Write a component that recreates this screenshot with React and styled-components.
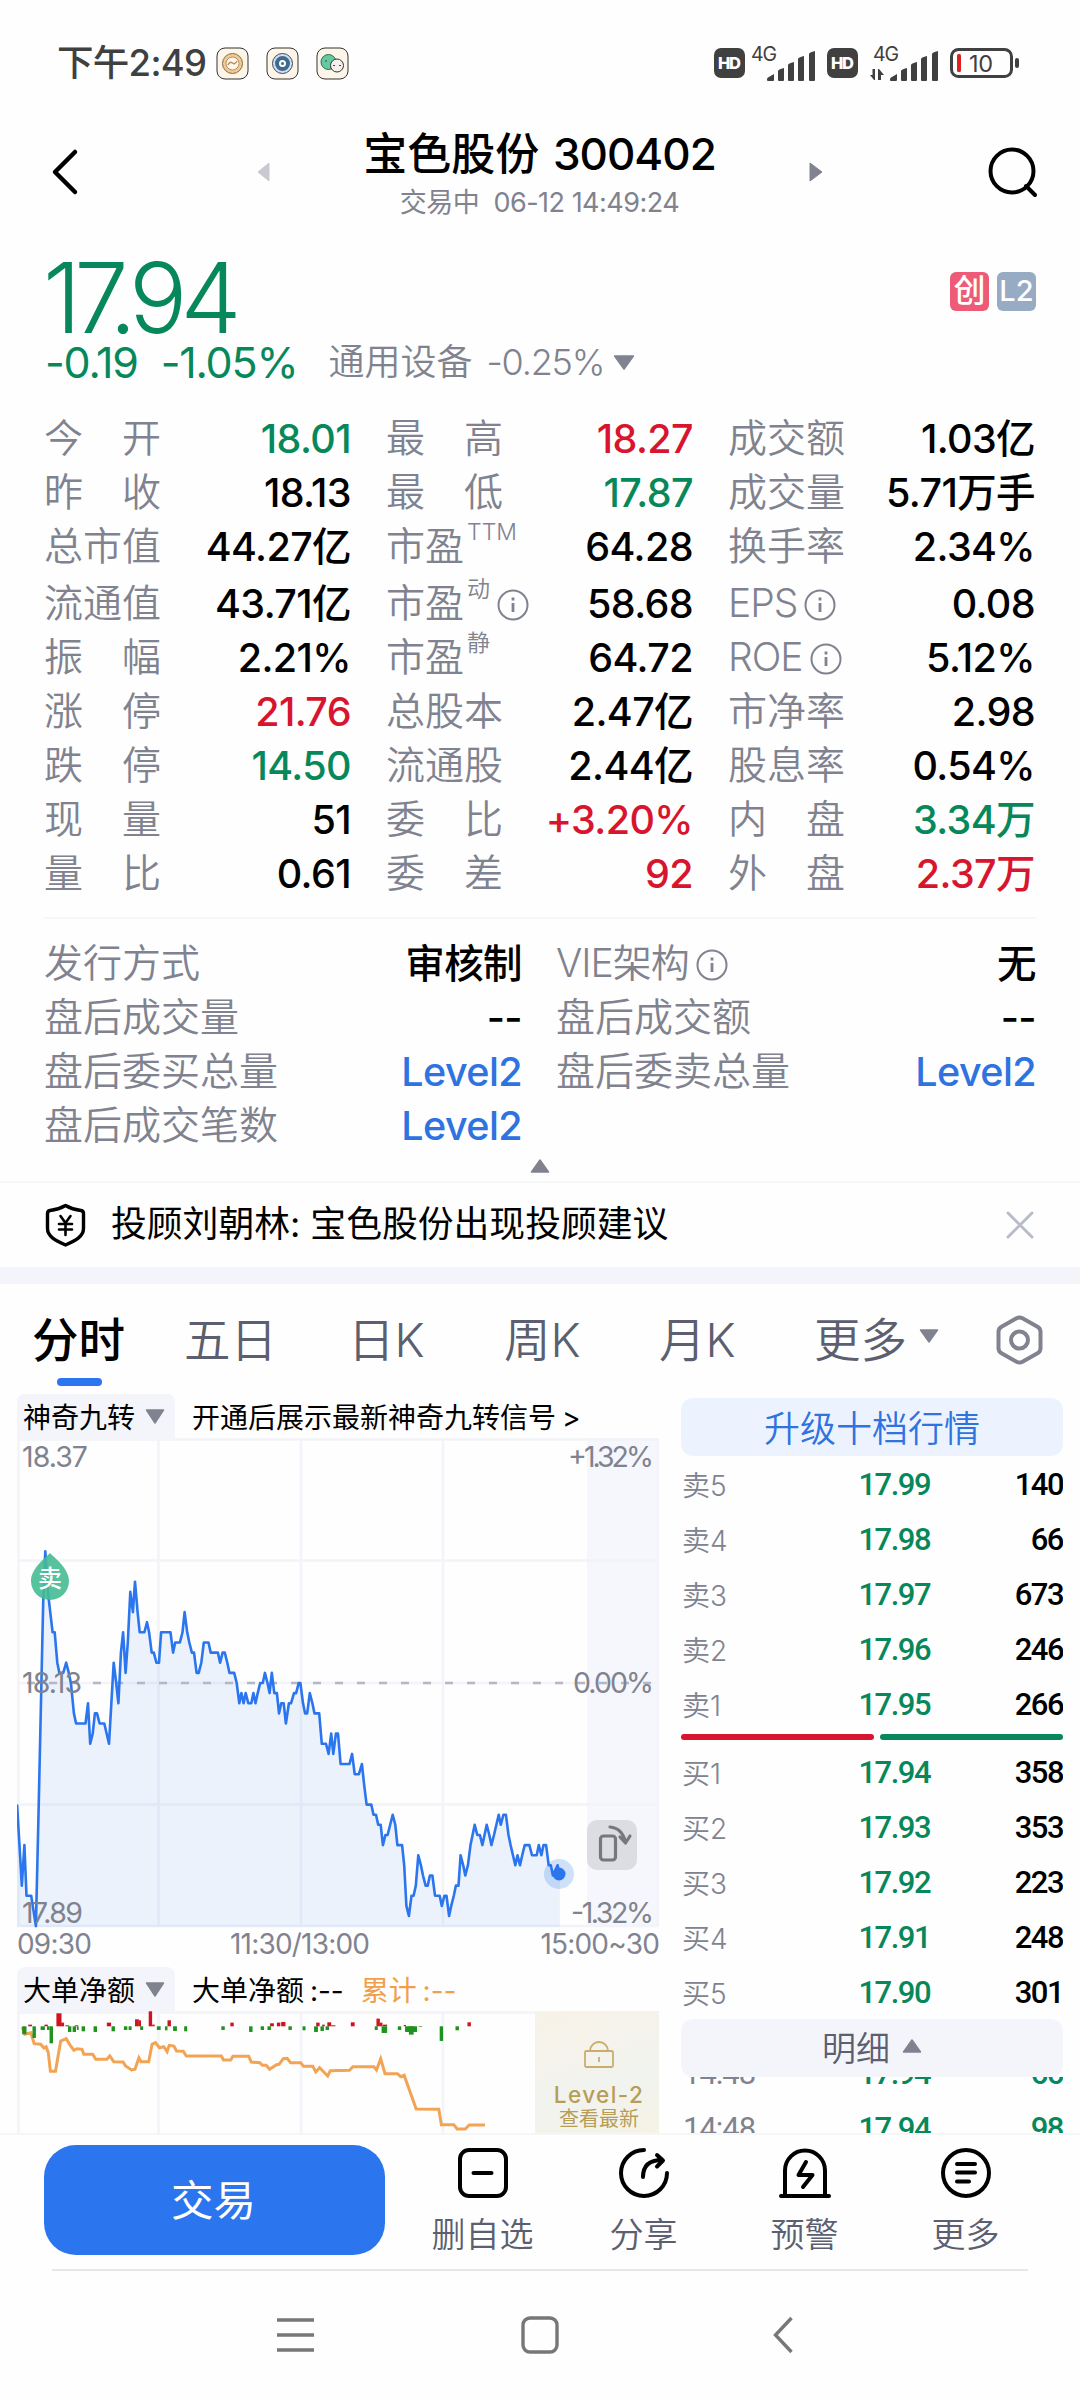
import React from 'react';
import styled, { createGlobalStyle } from 'styled-components';

const GREEN = '#07885a';
const RED = '#d8152f';
const BLUE = '#2b75ee';
const GREY = '#80838f';
const SLATE = '#5b5f70';
const colors = { green: GREEN, red: RED, blue: '#2f73e0' };

const GlobalStyle = createGlobalStyle`
  * {
    box-sizing: border-box;
  }
  body {
    margin: 0;
    background: #fff;
    color: #000;
    font-family: Inter, 'Noto Sans CJK SC', sans-serif;
  }
  svg {
    display: block;
    flex-shrink: 0;
    overflow: visible;
  }
`;

const Screen = styled.div`
  width: 1080px;
  height: 2400px;
  overflow: hidden;
  display: flex;
  flex-direction: column;
  background: #fefefe;
  white-space: nowrap;
`;

/* status bar */

const StatusBar = styled.div`
  height: 104px;
  padding: 22px 61px 0 57px;
  display: flex;
  align-items: center;
  justify-content: space-between;
  color: #404040;
`;

const StatusGroup = styled.div`
  display: flex;
  align-items: center;
  gap: ${(p) => p.$gap}px;
`;

const Clock = styled.span`
  width: 142px;
  font-size: 36.5px;
  line-height: 40px;
  font-weight: 500;
  letter-spacing: -0.7px;
`;

/* header */

const Header = styled.header`
  height: 136px;
  display: grid;
  grid-template-columns: 257px 13px 1fr 14px 257px;
  align-items: center;
`;

const HeaderSide = styled.div`
  display: flex;
  justify-content: ${(p) => (p.$end ? 'flex-end' : 'flex-start')};
  padding: 0 42px 0 51px;
`;

const TitleBox = styled.div`
  padding-top: 6px;
  text-align: center;
`;

const Title = styled.h1`
  margin: 0;
  font-size: 44px;
  line-height: 56px;
  font-weight: 500;

  span {
    margin-left: 2px;
    letter-spacing: -1px;
  }
`;

const SubTitle = styled.div`
  font-size: 27px;
  line-height: 42px;
  letter-spacing: -0.5px;
  color: ${GREY};
`;

/* price */

const PriceBlock = styled.section`
  height: 172px;
  padding: 12px 44px 0 45px;
`;

const PriceRow = styled.div`
  display: flex;
  align-items: flex-start;
  justify-content: space-between;
`;

const Price = styled.div`
  font-size: 97px;
  line-height: 92px;
  font-weight: 350;
  letter-spacing: -7px;
  margin-left: -2px;
  color: ${GREEN};
`;

const Badges = styled.div`
  display: flex;
  gap: 8px;
  margin-top: 20px;
`;

const Badge = styled.span`
  width: 39px;
  height: 39px;
  border-radius: 6px;
  background: ${(p) => p.$bg};
  color: #fff;
  font-size: ${(p) => p.$size}px;
  line-height: 38px;
  font-weight: ${(p) => p.$weight};
  text-align: center;
`;

const ChangeRow = styled.div`
  height: 36px;
  display: flex;
  align-items: center;
  color: ${GREEN};
  font-size: 43px;
  line-height: 36px;
  letter-spacing: -1.2px;
`;

const Percent = styled.span`
  margin-left: 23px;
`;

const Sector = styled.span`
  display: flex;
  align-items: center;
  margin-left: 31px;
  font-size: 36px;
  font-weight: 350;
  letter-spacing: 0;
  color: ${GREY};

  span {
    margin: 0 9px 0 14px;
    letter-spacing: -1.2px;
  }
`;

/* quote table */

const QuoteGrid = styled.section`
  display: grid;
  grid-template-columns: repeat(3, 307px);
  grid-template-rows: 54px 54px 54px 57px repeat(5, 54px);
  column-gap: 35px;
  padding: 0 44px;
`;

const ExtraGrid = styled.section`
  display: grid;
  grid-template-columns: 478px 480px;
  grid-auto-rows: 54px;
  column-gap: 34px;
  margin: 16px 44px 0;
  padding-top: 18px;
  border-top: 2px solid #f5f6f8;
`;

const Cell = styled.div`
  display: flex;
  align-items: center;
  justify-content: space-between;
  padding-top: ${(p) => (p.$low ? 3 : 0)}px;
`;

const Label = styled.span`
  display: flex;
  align-items: center;
  justify-content: ${(p) => (p.$spread ? 'space-between' : 'flex-start')};
  width: ${(p) => (p.$spread ? '117px' : 'auto')};
  font-size: 39px;
  line-height: 50px;
  font-weight: 350;
  letter-spacing: ${(p) => (p.$latin ? '-1px' : 0)};
  color: ${GREY};
  margin-top: -3px;

  sup {
    align-self: flex-start;
    font-size: 23px;
    line-height: 23px;
    margin-left: 3px;
  }
  svg {
    margin: 4px 0 0 7px;
  }
`;

const Value = styled.span`
  font-size: 39.5px;
  line-height: 50px;
  font-weight: 500;
  letter-spacing: -0.6px;
  color: ${(p) => colors[p.$tone] || '#000'};
`;

const Collapse = styled.div`
  height: 28px;
  display: flex;
  align-items: center;
  justify-content: center;
  padding-bottom: 2px;
`;

/* notice */

const Notice = styled.section`
  height: 86px;
  display: flex;
  align-items: center;
  padding: 0 46px 0 45px;
  border-top: 2px solid #f5f6f8;
`;

const NoticeText = styled.p`
  flex: 1;
  margin: -8px 0 0 25px;
  font-size: 35.8px;
`;

const Band = styled.div`
  height: 17px;
  flex-shrink: 0;
  background: #f4f5fa;
`;

/* tabs */

const Tabs = styled.nav`
  height: 110px;
  flex-shrink: 0;
  display: grid;
  grid-template-columns: 152px 164px 156px 155px 155px 182px 47px;
  align-items: center;
  padding: 2px 0 0 32px;
`;

const Tab = styled.div`
  position: relative;
  display: flex;
  align-items: center;
  gap: 12px;
  height: 104px;
  margin-top: -8px;
  font-size: 46.500px;
  font-weight: ${(p) => (p.$active ? 500 : 350)};
  color: ${(p) => (p.$active ? '#000' : SLATE)};

  &::after {
    content: '';
    display: ${(p) => (p.$active ? 'block' : 'none')};
    position: absolute;
    left: 25px;
    top: 94px;
    width: 45px;
    height: 8px;
    border-radius: 4px;
    background: ${BLUE};
  }
`;

/* charts and order book */

const Main = styled.main`
  height: 739px;
  flex-shrink: 0;
  display: grid;
  grid-template-columns: 642px 382px;
  column-gap: 22px;
  padding-left: 17px;
  overflow: hidden;
`;

const Column = styled.div`
  height: 739px;
  overflow: hidden;
`;

const IndicatorBar = styled.div`
  height: 44px;
  display: flex;
  align-items: center;
  font-size: 28px;
  word-spacing: -2px;
`;

const Picker = styled.div`
  width: 158px;
  height: 44px;
  display: flex;
  align-items: center;
  justify-content: space-between;
  padding: 0 10px 0 6px;
  margin-right: 17px;
  border-radius: 8px 8px 0 0;
  background: #f4f5fa;
`;

const Accent = styled.span`
  margin-left: 17px;
  color: #f0a04c;
`;

const TimeAxis = styled.div`
  height: 40px;
  display: grid;
  grid-template-columns: 213px 1fr auto;
  font-size: 28px;
  line-height: 34px;
  letter-spacing: -0.8px;
  color: ${GREY};
`;

const FlowRow = styled.div`
  display: grid;
  grid-template-columns: 518px 124px;
  height: 123px;
`;

const Level2Card = styled.div`
  display: flex;
  flex-direction: column;
  align-items: center;
  padding: 30px 0 0 4px;
  background: linear-gradient(160deg, #f8f2e7, #f1f3ef 60%, #f6f3e6);
  color: #b99c58;
  font-size: 20px;
  line-height: 24px;

  strong {
    margin-top: 14px;
    font-size: 22.500px;
    line-height: 25px;
    font-weight: 500;
    letter-spacing: 1.4px;
  }
`;

const WideButton = styled.div`
  height: 58px;
  display: flex;
  align-items: center;
  justify-content: center;
  gap: 12px;
  padding-bottom: ${(p) => p.$lift}px;
  border-radius: 12px;
  font-size: ${(p) => p.$size}px;
  font-weight: 350;
  background: ${(p) => (p.$primary ? '#edf3fe' : '#f4f5fa')};
  color: ${(p) => (p.$primary ? '#2f73e0' : SLATE)};
`;

const Book = styled.div`
  padding-top: 4px;
`;

const BookRow = styled.div`
  display: grid;
  grid-template-columns: 100px 149px 1fr;
  align-items: center;
  height: 55px;
  font-family: Roboto, 'Noto Sans CJK SC', sans-serif;
  font-size: 31px;
  font-weight: 500;
  letter-spacing: -1.500px;
  color: ${(p) => (p.$trade ? GREEN : '#000')};

  span {
    padding-top: 2px;
    text-align: right;
  }
  span:first-child {
    padding: ${(p) => (p.$trade ? '2px 0 0 2px' : '0 0 0 1px')};
    text-align: left;
    font-size: ${(p) => (p.$trade ? 31 : 28)}px;
    font-family: ${(p) => (p.$trade ? 'Roboto' : 'Inter')}, 'Noto Sans CJK SC', sans-serif;
    font-weight: ${(p) => (p.$trade ? 400 : 350)};
    letter-spacing: ${(p) => (p.$trade ? -1 : 0)}px;
    color: ${GREY};
  }
  span:nth-child(2) {
    color: ${GREEN};
  }
`;

const Ratio = styled.div`
  display: grid;
  grid-template-columns: 193px 183px;
  gap: 6px;
  height: 6px;
  margin-top: 3px;
`;

const RatioPart = styled.div`
  border-radius: 3px;
  background: ${(p) => p.$bg};
`;

const Trades = styled.div`
  height: 57px;
  overflow: hidden;

  > :first-child {
    margin-top: -32px;
  }
`;

/* bottom bar */

const BottomBar = styled.footer`
  height: 136px;
  flex-shrink: 0;
  display: flex;
  padding: 10px 34px 0 44px;
  border-top: 2px solid #f5f6f8;
`;

const TradeButton = styled.button`
  width: 341px;
  height: 110px;
  padding: 0 2px 6px 0;
  border: 0;
  border-radius: 32px;
  margin-right: 17px;
  background: ${BLUE};
  color: #fff;
  font: 400 42.500px Inter, 'Noto Sans CJK SC', sans-serif;
`;

const Action = styled.div`
  width: 161px;
  display: flex;
  flex-direction: column;
  align-items: center;
  padding-top: 3px;
  font-size: 34px;
  line-height: 74px;
  font-weight: 350;
  color: ${SLATE};
`;

const SystemNav = styled.div`
  height: 130px;
  display: grid;
  grid-template-columns: 37px 37px 20px;
  column-gap: 207px;
  align-items: center;
  margin: 0 52px;
  padding: 0 0 0 225px;
  border-top: 2px solid #e6e7e9;

  > :last-child {
    margin-left: 8px;
  }
`;

/* icons */

const Caret = ({ w = 20, h = 14, dir = 'down', fill = GREY }) => {
  const turn = { down: 0, up: 180 }[dir];
  return (
    <svg width={w} height={h} viewBox='0 0 20 14' preserveAspectRatio='none'>
      <path
        d='M1.5 1h17L10 13z'
        fill={fill}
        stroke={fill}
        strokeWidth='1.5'
        strokeLinejoin='round'
        transform={`rotate(${turn} 10 7)`}
      />
    </svg>
  );
};

const Info = () => (
  <svg width='32' height='32' viewBox='0 0 32 32' fill='none' stroke={GREY}>
    <circle cx='16' cy='16' r='14.5' strokeWidth='2' />
    <path d='M16 14v9' strokeWidth='2.8' />
    <path d='M16 8.5v3' strokeWidth='2.8' />
  </svg>
);

const AppTile = ({ children }) => (
  <svg width='33' height='33' viewBox='0 0 33 33'>
    <rect x='1' y='1' width='31' height='31' rx='8' fill='#fcf5e8' stroke='#333' strokeWidth='1' />
    {children}
  </svg>
);

const Hd = () => (
  <svg width='31' height='30' viewBox='0 0 31 30'>
    <rect width='31' height='30' rx='7' fill='#404040' />
    <text x='4' y='20.8' fontSize='16.500' fontWeight='800' fill='#fff' textLength='23'>
      HD
    </text>
  </svg>
);

const Signal = ({ data }) => (
  <svg width={data ? 68 : 64} height='37' viewBox={data ? '0 0 68 37' : '0 0 64 37'} fill='#404040'>
    <text x={data ? 3 : 0} y='16' fontSize='19.5' textLength='26'>
      4G
    </text>
    <g transform={data ? 'translate(4 0)' : ''}>
      <path d='M16 34.500q0-1.500 1-2l6-3.500v6q0 1-1 1h-5q-1 0-1-1z' />
      <path d='M27 26q0-1.500 6-3v12q0 1-1 1h-4q-1 0-1-1z' />
      <path d='M37 20q0-1.500 6-3v18q0 1-1 1h-4q-1 0-1-1z' />
      <path d='M47 14q0-1.500 6-3v24q0 1-1 1h-4q-1 0-1-1z' />
      <path d='M58 9q0-1.500 6-3v29q0 1-1 1h-4q-1 0-1-1z' />
    </g>
    {data && <path d='M5 24v11h-1l-4-5h2.500v-6zM8 35V24h1l5 6h-3v5z' />}
  </svg>
);

const Battery = () => (
  <svg width='69' height='30' viewBox='0 0 69 30'>
    <rect x='1.500' y='1.500' width='60' height='27' rx='7' fill='none' stroke='#404040' strokeWidth='3' />
    <rect x='7' y='6' width='4' height='18' rx='1.500' fill='#e02020' />
    <rect x='65' y='10' width='4' height='10' rx='2' fill='#404040' />
    <text x='19' y='23.500' fontSize='23.500' fill='#404040' textLength='24'>
      10
    </text>
  </svg>
);

const stroke = { fill: 'none', stroke: '#000', strokeWidth: 4, strokeLinecap: 'round', strokeLinejoin: 'round' };

const actions = [
  {
    name: '删自选',
    icon: (
      <>
        <rect x='3' y='2' width='46' height='46' rx='9' />
        <path d='M16.500 25h18' />
      </>
    ),
  },
  {
    name: '分享',
    icon: (
      <>
        <path d='M26 2a23 23 0 1 0 23 23' />
        <path d='M25 29c0-11 6-17 19-17M39 7l6 5.500-6 6' />
      </>
    ),
  },
  {
    name: '预警',
    icon: (
      <>
        <path d='M2 48h48M6 47V22.500a20 20 0 0 1 40 0V47' />
        <path d='M27 14l-7.500 13h14l-9.500 12' />
      </>
    ),
  },
  {
    name: '更多',
    icon: (
      <>
        <circle cx='26' cy='25' r='23' />
        <path d='M17 16h18M17 24.500h18M17 33.500h12' />
      </>
    ),
  },
];

/* data */

const quotes = [
  ['今开', '18.01', 'green'], ['最高', '18.27', 'red'], ['成交额', '1.03亿'],
  ['昨收', '18.13'], ['最低', '17.87', 'green'], ['成交量', '5.71万手'],
  ['总市值', '44.27亿'], ['市盈', '64.28', '', 'TTM'], ['换手率', '2.34%'],
  ['流通值', '43.71亿'], ['市盈', '58.68', '', '动', true], ['EPS', '0.08', '', '', true],
  ['振幅', '2.21%'], ['市盈', '64.72', '', '静'], ['ROE', '5.12%', '', '', true],
  ['涨停', '21.76', 'red'], ['总股本', '2.47亿'], ['市净率', '2.98'],
  ['跌停', '14.50', 'green'], ['流通股', '2.44亿'], ['股息率', '0.54%'],
  ['现量', '51'], ['委比', '+3.20%', 'red'], ['内盘', '3.34万', 'green'],
  ['量比', '0.61'], ['委差', '92', 'red'], ['外盘', '2.37万', 'red'],
];

const extras = [
  ['发行方式', '审核制'], ['VIE架构', '无', '', '', true],
  ['盘后成交量', '--'], ['盘后成交额', '--'],
  ['盘后委买总量', 'Level2', 'blue'], ['盘后委卖总量', 'Level2', 'blue'],
  ['盘后成交笔数', 'Level2', 'blue'],
];

const asks = [
  ['卖5', '17.99', '140'], ['卖4', '17.98', '66'], ['卖3', '17.97', '673'],
  ['卖2', '17.96', '246'], ['卖1', '17.95', '266'],
];

const bids = [
  ['买1', '17.94', '358'], ['买2', '17.93', '353'], ['买3', '17.92', '223'],
  ['买4', '17.91', '248'], ['买5', '17.90', '301'],
];

const trades = [
  ['14:48', '17.94', '66'],
  ['14:48', '17.94', '98'],
];

// time offset, price distance from the previous close in cents
const ticks = `40,-12 51,-20 57,-16 62,-21 73,-21 84,-24 90,-13 101,8 106,13 112,9 123,5 128,5 134,2 139,1 148,1
155,2 161,1 166,0 173,-3 178,-4 200,-4 206,-2 211,-6 217,-5 222,-3 227,-3 233,-4 244,-4 255,-6 266,2 272,0 277,-2
283,3 288,5 294,1 299,4 305,9 311,7 316,10 322,7 327,5 338,5 344,6 349,5 355,3 360,3 366,2 372,2 377,5 399,5 405,3
410,4 421,4 427,5 432,7 438,5 443,4 449,3 454,3 460,1 465,1 471,2 477,4 488,4 493,3 510,3 515,2 521,3 526,3 532,2
537,1 548,1 554,0 560,-2 565,-1 570,-2 575,-1 581,-2 588,-2 593,-1 598,-2 603,-1 609,0 615,0 620,1 626,0 631,-1
636,1 642,-1 648,-1 653,-3 658,-2 664,-2 669,-4 676,-2 681,-2 688,-1 693,-1 699,0 703,0 709,-2 714,-3 719,-3 725,-1
731,-2 736,-3 747,-3 753,-6 763,-6 769,-7 775,-5 780,-7 786,-5 791,-5 797,-8 818,-8 824,-7 830,-9 840,-9 847,-8
852,-10 858,-12 869,-12 874,-13 880,-13 885,-14 891,-14 896,-16 902,-15 907,-15 919,-13 925,-14 930,-16 941,-16
946,-18 951,-22 957,-23 963,-21 968,-21 973,-20 979,-17 985,-18 990,-19 996,-20 1001,-20 1006,-19 1012,-19 1018,-21
1029,-21 1034,-22 1040,-21 1045,-21 1051,-23 1056,-22 1062,-21 1067,-20 1073,-20 1078,-17 1084,-18 1089,-19 1095,-18
1101,-16 1111,-14 1117,-15 1123,-15 1129,-16 1139,-14 1145,-15 1150,-16 1156,-15 1167,-13 1172,-14 1178,-13 1184,-13
1190,-15 1195,-16 1206,-18 1211,-17 1217,-18 1222,-17 1228,-16 1239,-16 1245,-17 1256,-17 1261,-16 1267,-17 1272,-16
1278,-16 1284,-18 1289,-18 1294,-19 1305,-18 1310,-19`;

const netFlow = `52,48 58,70 72,65 80,98 95,100 103,111 108,107 113,125 118,181 130,181 136,135 142,90 155,83 163,100
173,118 180,113 192,115 196,130 217,130 224,145 250,145 257,135 266,152 288,153 294,165 308,177 316,175 325,140
330,152 348,152 356,100 364,95 373,110 383,107 391,122 396,103 407,105 413,120 429,121 436,135 518,135 523,147
540,147 545,136 582,136 588,153 608,155 614,163 623,163 631,175 647,161 653,160 663,143 672,142 680,155 704,155
710,166 732,166 739,183 748,170 767,195 773,179 818,178 826,167 875,167 881,177 891,143 901,188 930,188 938,197
946,193 952,215 974,294 1027,295 1033,341 1062,341 1070,354 1089,354 1098,342 1135,342`;

// time offset, width, signed size
const flowBars = `66,9,5 104,8,5 132,12,39 143,7,11 153,9,3 175,8,3 250,10,11 316,9,21 325,5,18 348,8,45 356,6,5
392,8,18 539,8,11 632,9,9 648,8,11 658,10,13 740,8,11 754,6,5 766,9,12 775,10,3 821,9,12 881,8,23 889,6,11 896,10,5
945,5,4 1094,8,12 52,10,-24 76,8,-35 95,10,-11 110,6,-11 116,8,-51 159,8,-17 170,8,-17 180,4,-11 191,8,-15 219,8,-17
261,8,-15 290,8,-11 301,7,-11 328,7,-11 367,9,-11 386,6,-12 405,9,-14 431,7,-15 518,8,-11 583,8,-17 610,8,-11
626,8,-11 675,8,-11 708,7,-12 735,9,-17 750,8,-14 762,8,-11 877,7,-11 893,13,-20 931,8,-11 948,28,-17 957,11,-25
980,8,-2 1029,8,-44 1066,8,-12`;

const parse = (s) => s.split(/\s+/).map((p) => p.split(',').map(Number));
const toX = (t) => t * 0.4273 - 17;
const line = (points, toY) =>
  points.map(([t, v], i) => `${i ? 'L' : 'M'}${toX(t).toFixed(1)} ${toY(v).toFixed(1)}`).join('');

const PriceChart = () => {
  const d = line(parse(ticks), (c) => 245 - c * 10.13);
  const text = { fontSize: 28.5, fill: GREY };
  return (
    <svg width='642' height='489' viewBox='0 0 642 489'>
      <rect x='570' width='72' height='489' fill='#f5f7fc' />
      <path
        d='M0 1.500h642M0 122.500h642M0 245h642M0 366.500h642M0 488h642M1.500 0v489M141.500 0v489M284 0v489M426 0v489M641 0v489'
        fill='none'
        stroke='#f2f4f9'
        strokeWidth='2.500'
      />
      <path d={`${d}V489H0z`} fill='#2b75ee' fillOpacity='0.09' />
      <path d='M10 245h626' stroke='#b4b7c6' strokeWidth='2.500' strokeDasharray='8 14' />
      <path d={d} fill='none' stroke={BLUE} strokeWidth='2.600' strokeLinejoin='round' />
      <text x='5' y='29' {...text} textLength='66'>18.37</text>
      <text x='5' y='255' {...text} textLength='60'>18.13</text>
      <text x='5' y='485' {...text} textLength='61'>17.89</text>
      <text x='551' y='29' {...text} textLength='86'>+1.32%</text>
      <text x='556' y='255' {...text} textLength='81'>0.00%</text>
      <text x='554' y='485' {...text} textLength='83'>-1.32%</text>
      <path d='M33 115c-6 6-19 16-19 28a19 19 0 0 0 38 0c0-12-13-22-19-28z' fill='#45bb94' fillOpacity='0.9' />
      <text x='21' y='149' fontSize='24' fontWeight='500' fill='#fff'>卖</text>
      <circle cx='542' cy='436' r='15' fill={BLUE} fillOpacity='0.22' />
      <circle cx='542' cy='436' r='6.500' fill={BLUE} />
      <rect x='570' y='382' width='50' height='50' rx='10' fill='#dcdde2' />
      <g fill='none' stroke='#77787c' strokeWidth='3.200' strokeLinecap='round' strokeLinejoin='round'>
        <rect x='583.500' y='398' width='15' height='24' rx='3' />
        <path d='M593 389q12 1 15.500 15M603 399l5.500 6 4.500-7' />
      </g>
    </svg>
  );
};

const FlowChart = () => (
  <svg width='518' height='123' viewBox='0 0 518 123'>
    <path
      d='M0 1.500h518M1.500 0v123M141.500 0v123M284 0v123M426 0v123'
      fill='none'
      stroke='#f2f4f9'
      strokeWidth='2.500'
    />
    <path d={line(parse(netFlow), (v) => v / 3)} fill='none' stroke='#f2a353' strokeWidth='3' />
    {parse(flowBars).map(([t, w, v]) => (
      <rect
        key={`${t}${v}`}
        x={toX(t)}
        y={v > 0 ? 15.3 - v / 3 : 15.3}
        width={w * 0.4273}
        height={Math.abs(v) / 3}
        fill={v > 0 ? '#cf1322' : '#1e921e'}
      />
    ))}
  </svg>
);

const Quote = ({ item, low, spread }) => {
  const [name, value, tone, sup, info] = item;
  const split = spread && name.length === 2 && !sup;
  return (
    <Cell $low={low}>
      <Label $spread={split} $latin={/^[A-Z]+/.test(name)}>
        {split ? name.split('').map((c) => <span key={c}>{c}</span>) : name}
        {sup && <sup>{sup}</sup>}
        {info && <Info />}
      </Label>
      <Value $tone={tone}>{value}</Value>
    </Cell>
  );
};

const App = () => {
  return (
    <>
      <GlobalStyle />
      <Screen>
        <StatusBar>
          <StatusGroup $gap={17}>
            <Clock>下午2:49</Clock>
            <AppTile>
              <circle cx='16.500' cy='16.500' r='10' fill='#eecb96' stroke='#8a6a3c' strokeWidth='1' />
              <circle cx='16.500' cy='16.500' r='6.500' fill='#fff6ea' stroke='#b98f66' />
              <path d='M12 18q2-4 4.500-2t4.500-2' fill='none' stroke='#b98f66' strokeWidth='1.500' />
            </AppTile>
            <AppTile>
              <circle cx='16.500' cy='16.500' r='10' fill='#cfe0f5' stroke='#3b4a63' strokeWidth='1' />
              <circle cx='16.500' cy='16.500' r='7.500' fill='#41698a' />
              <circle cx='16.500' cy='16.500' r='2.500' fill='none' stroke='#fff' strokeWidth='2' />
            </AppTile>
            <AppTile>
              <circle cx='12.500' cy='15' r='7.500' fill='#65c9a2' stroke='#2f6b55' strokeWidth='1' />
              <circle cx='21' cy='18.500' r='6.500' fill='#f6efec' stroke='#333' strokeWidth='1' />
              <path d='M17 18.500h2M23 18.500h2M10 13v2' stroke='#444' />
            </AppTile>
          </StatusGroup>
          <StatusGroup $gap={12}>
            <StatusGroup $gap={6}>
              <Hd />
              <Signal />
            </StatusGroup>
            <Hd />
            <Signal data />
            <Battery />
          </StatusGroup>
        </StatusBar>

        <Header>
          <HeaderSide>
            <svg width='28' height='46' viewBox='0 0 28 46' {...stroke} strokeWidth='4.500'>
              <path d='M24 3L4 23l20 20' />
            </svg>
          </HeaderSide>
          <svg width='13' height='20' viewBox='0 0 13 20'>
            <path d='M12 1v18L1 10z' fill='#c9cad1' stroke='#c9cad1' strokeLinejoin='round' />
          </svg>
          <TitleBox>
            <Title>
              宝色股份 <span>300402</span>
            </Title>
            <SubTitle>交易中&nbsp; 06-12 14:49:24</SubTitle>
          </TitleBox>
          <svg width='14' height='20' viewBox='0 0 14 20'>
            <path d='M1 1v18l12-9z' fill={GREY} stroke={GREY} strokeLinejoin='round' />
          </svg>
          <HeaderSide $end>
            <svg width='50' height='50' viewBox='0 0 50 50' {...stroke}>
              <circle cx='24' cy='24' r='21.500' />
              <path d='M38 39l9 9' />
            </svg>
          </HeaderSide>
        </Header>

        <PriceBlock>
          <PriceRow>
            <Price>17.94</Price>
            <Badges>
              <Badge $bg='#ed5b76' $size={32} $weight={500}>创</Badge>
              <Badge $bg='#98abc4' $size={29} $weight={500}>L2</Badge>
            </Badges>
          </PriceRow>
          <ChangeRow>
            -0.19
            <Percent>-1.05%</Percent>
            <Sector>
              通用设备
              <span>-0.25%</span>
              <Caret w={22} h={15} />
            </Sector>
          </ChangeRow>
        </PriceBlock>

        <QuoteGrid>
          {quotes.map((q, i) => (
            <Quote key={i} item={q} low={i > 8 && i < 12} spread />
          ))}
        </QuoteGrid>
        <ExtraGrid>
          {extras.map((q) => (
            <Quote key={q[0]} item={q} />
          ))}
        </ExtraGrid>
        <Collapse>
          <Caret dir='up' />
        </Collapse>

        <Notice>
          <svg width='41' height='44' viewBox='0 0 41 44' {...stroke} strokeWidth='3.400'>
            <path d='M20.500 2.500q7 4 15.500 5 2.500.5 2.500 3v15c0 8-8 12-18 16.500-10-4.500-18-8.500-18-16.500v-15q0-2.500 2.500-3 8.500-1 15.500-5z' />
            <path d='M15.500 13l5 7 5-7M14 21h13M14 26.500h13M20.500 20v12' strokeWidth='2.600' />
          </svg>
          <NoticeText>投顾刘朝林: 宝色股份出现投顾建议</NoticeText>
          <svg width='28' height='28' viewBox='0 0 28 28' fill='none' stroke='#b9bdca' strokeWidth='3' strokeLinecap='round'>
            <path d='M2 2l24 24M26 2L2 26' />
          </svg>
        </Notice>
        <Band />

        <Tabs>
          <Tab $active>分时</Tab>
          <Tab>五日</Tab>
          <Tab>日K</Tab>
          <Tab>周K</Tab>
          <Tab>月K</Tab>
          <Tab>
            更多
            <Caret />
          </Tab>
          <svg width='47' height='50' viewBox='0 0 47 50' fill='none' stroke={GREY} strokeWidth='4'>
            <path
              d='M20.500 3.300q3-1.600 6 0l15 8.400q3 1.700 3 5v16.600q0 3.300-3 5l-15 8.400q-3 1.600-6 0l-15-8.400q-3-1.700-3-5V16.700q0-3.300 3-5z'
              strokeLinejoin='round'
            />
            <circle cx='23.500' cy='25' r='8.500' />
          </svg>
        </Tabs>

        <Main>
          <Column>
            <IndicatorBar>
              <Picker>
                神奇九转
                <Caret h={15} />
              </Picker>
              开通后展示最新神奇九转信号 &gt;
            </IndicatorBar>
            <PriceChart />
            <TimeAxis>
              <span>09:30</span>
              <span>11:30/13:00</span>
              <span>15:00~30</span>
            </TimeAxis>
            <IndicatorBar>
              <Picker>
                大单净额
                <Caret h={15} />
              </Picker>
              大单净额 :--
              <Accent>累计 :--</Accent>
            </IndicatorBar>
            <FlowRow>
              <FlowChart />
              <Level2Card>
                <svg width='30' height='27' viewBox='0 0 30 27' fill='none' stroke='#c9ae6b' strokeWidth='1.800'>
                  <rect x='1' y='10' width='28' height='16' rx='1.500' />
                  <path d='M6 10a9 9 0 0 1 18 0M15 16v5' />
                </svg>
                <strong>Level-2</strong>
                查看最新
              </Level2Card>
            </FlowRow>
          </Column>

          <Column>
            <Book>
              <WideButton $primary $size={36} $lift={3}>升级十档行情</WideButton>
              {asks.map((r) => (
                <BookRow key={r[0]}>
                  {r.map((c) => <span key={c}>{c}</span>)}
                </BookRow>
              ))}
            </Book>
            <Ratio>
              <RatioPart $bg={RED} />
              <RatioPart $bg={GREEN} />
            </Ratio>
            <Book>
              {bids.map((r) => (
                <BookRow key={r[0]}>
                  {r.map((c) => <span key={c}>{c}</span>)}
                </BookRow>
              ))}
            </Book>
            <WideButton $size={34} $lift={4}>
              明细
              <Caret dir='up' />
            </WideButton>
            <Trades>
              {trades.map((r) => (
                <BookRow key={r[2]} $trade>
                  {r.map((c) => <span key={c}>{c}</span>)}
                </BookRow>
              ))}
            </Trades>
          </Column>
        </Main>

        <BottomBar>
          <TradeButton>交易</TradeButton>
          {actions.map((a) => (
            <Action key={a.name}>
              <svg width='52' height='50' viewBox='0 0 52 50' {...stroke}>
                {a.icon}
              </svg>
              {a.name}
            </Action>
          ))}
        </BottomBar>
        <SystemNav>
          <svg width='37' height='36' viewBox='0 0 37 36' stroke='#777' strokeWidth='3.600'>
            <path d='M0 3h37M0 18h37M0 33h37' />
          </svg>
          <svg width='38' height='38' viewBox='0 0 38 38' fill='none' stroke='#777' strokeWidth='3.400'>
            <rect x='2' y='2' width='34' height='34' rx='7' />
          </svg>
          <svg width='20' height='36' viewBox='0 0 20 36' fill='none' stroke='#777' strokeWidth='3.400'>
            <path d='M18.500 1L2.500 18l16 17' />
          </svg>
        </SystemNav>
      </Screen>
    </>
  );
};

export default App;
